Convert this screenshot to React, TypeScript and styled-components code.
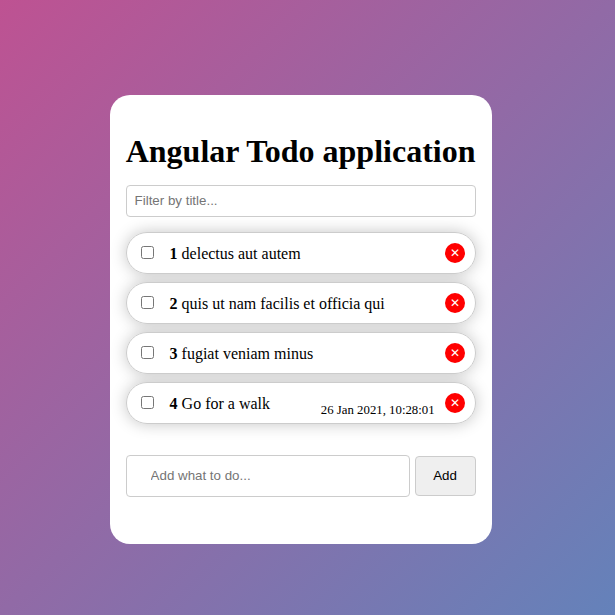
import React from "react";
import styled, { createGlobalStyle } from "styled-components";

const GlobalStyle = createGlobalStyle`
  * { box-sizing: border-box; }
  html, body { margin: 0; height: 100%; }
  body { font-family: "Liberation Serif", "Times New Roman", serif; color: #000; }
`;

const Page = styled.main`
  height: 615px;
  overflow: hidden;
  padding: 95px 0 0 109.6px;
  background: linear-gradient(135deg, #be5292, #6482ba);
`;

const Card = styled.section`
  position: relative;
  z-index: 0;
  width: 382px;
  height: 449px;
  padding: 38px 16px 0;
  border-radius: 20px;
  background: #fff;
`;

const Title = styled.h1`
  margin: 0 0 15px;
  font-size: 32px;
  line-height: 37px;
  white-space: nowrap;
  text-align: center;
`;

const TextInput = styled.input`
  display: block;
  border: 1px solid #ccc;
  border-radius: 4px;
  outline: none;
  background: #fff;
  font: 13.333px "Liberation Sans", Arial, sans-serif;
  &::placeholder { color: #757575; }
`;

const FilterInput = styled(TextInput)`
  width: 350px;
  height: 32px;
  padding: 0 8px 2px;
`;

const List = styled.ul`
  display: flex;
  flex-direction: column;
  gap: 8px;
  margin: 15px 0 31px;
  padding: 0;
  list-style: none;
`;

const Item = styled.li`
  position: relative;
  display: flex;
  align-items: center;
  height: 42px;
  padding: 0 10px 0 14px;
  border: 1px solid #ccc;
  border-radius: 21px;
  background: #fff;

  /* Keeps each shadow beneath the neighbouring rows. */
  &::before {
    content: "";
    position: absolute;
    inset: -1px;
    z-index: -1;
    border-radius: 21px;
    box-shadow: 0 0 16px rgba(0, 0, 0, 0.23);
  }
`;

const Check = styled.input`
  width: 13px;
  height: 13px;
  margin: 0 16px 2px 0;
`;

const Label = styled.span`
  flex: 1;
  padding-top: 2px;
  font-size: 16px;
  line-height: 18px;
`;

const Stamp = styled.time`
  position: absolute;
  right: 40px;
  bottom: 5px;
  font-size: 12.8px;
  line-height: 15px;
`;

const Remove = styled.button`
  display: flex;
  align-items: center;
  justify-content: center;
  width: 20px;
  height: 20px;
  padding: 0 0 0 1px;
  border: 0;
  border-radius: 50%;
  background: #f00;
  color: #fff;
  font: 12px/18px "Liberation Sans", Arial, sans-serif;
`;

const Form = styled.form`
  display: flex;
  align-items: center;
  gap: 5px;
`;

const TodoInput = styled(TextInput)`
  width: 284px;
  height: 42px;
  padding: 0 24px 2px;
`;

const AddButton = styled.button`
  width: 61px;
  height: 40px;
  padding: 0 0 2px;
  border: 1px solid #ccc;
  border-radius: 4px;
  background: #efefef;
  color: #000;
  font: 13.333px "Liberation Sans", Arial, sans-serif;
`;

const todos = [
  { id: 1, title: "delectus aut autem" },
  { id: 2, title: "quis ut nam facilis et officia qui" },
  { id: 3, title: "fugiat veniam minus" },
  { id: 4, title: "Go for a walk", date: "26 Jan 2021, 10:28:01" },
];

export default function App() {
  return (
    <Page>
      <GlobalStyle />
      <Card>
        <Title>Angular Todo application</Title>
        <FilterInput placeholder="Filter by title..." />
        <List>
          {todos.map((t) => (
            <Item key={t.id}>
              <Check type="checkbox" />
              <Label><b>{t.id}</b> {t.title}</Label>
              {t.date && <Stamp>{t.date}</Stamp>}
              <Remove aria-label="Remove">✕</Remove>
            </Item>
          ))}
        </List>
        <Form onSubmit={(e) => e.preventDefault()}>
          <TodoInput placeholder="Add what to do..." />
          <AddButton>Add</AddButton>
        </Form>
      </Card>
    </Page>
  );
}
